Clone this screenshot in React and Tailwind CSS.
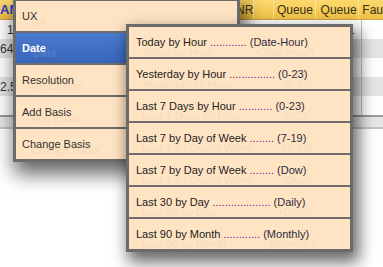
import React from 'react';

const mainItems = ['UX', 'Date', 'Resolution', 'Add Basis', 'Change Basis'];

const subItems = [
  ['Today by Hour', '............', '(Date-Hour)'],
  ['Yesterday by Hour', '...............', '(0-23)'],
  ['Last 7 Days by Hour', '...........', '(0-23)'],
  ['Last 7 by Day of Week', '........', '(7-19)'],
  ['Last 7 by Day of Week', '........', '(Dow)'],
  ['Last 30 by Day', '...................', '(Daily)'],
  ['Last 90 by Month', '............', '(Monthly)'],
];

const rows = [
  { left: '1', pad: 'pl-[7px]', right: '1', bg: 'bg-white' },
  { left: '64', pad: 'pl-0', right: '', bg: 'bg-[#e4e4e4]' },
  { left: '', pad: 'pl-0', right: '', bg: 'bg-white' },
  { left: '2.5', pad: 'pl-0', right: '', bg: 'bg-[#e4e4e4]' },
  { left: '', pad: 'pl-0', right: '', bg: 'bg-white' },
];

const App = () => {
  return (
    <div className="relative w-[383px] h-[267px] overflow-hidden bg-white font-['Liberation_Sans',Arial,sans-serif]">
      {/* table behind the menus */}
      <div className="flex flex-col">
        <div className="flex h-[20px] bg-gradient-to-b from-[#fcd96e] to-[#f1c043] border-b border-[#c8a548] text-[12px] text-[#333318]">
          <div className="w-[236px] flex items-center text-[#1f3fd0] font-bold text-[13px]">AM</div>
          <div className="w-[20px] flex items-center pl-[2px] bg-gradient-to-b from-[#f3cd5e] to-[#e8b63c] border-r border-[#fbe39a]">NR</div>
          <div className="w-[20px] border-r border-[#fbe39a]"></div>
          <div className="w-[42px] flex items-center pl-[3px] border-r border-[#fbe39a]">Queue</div>
          <div className="w-[44px] flex items-center pl-[5px] border-r border-[#fbe39a]">Queue</div>
          <div className="flex-1 flex items-center pl-[3px]">Fau</div>
        </div>
        {rows.map((r, i) => (
          <div key={i} className={`flex h-[19px] text-[12px] text-[#333] ${r.bg}`}>
            <div className={`w-[236px] flex items-center ${r.pad}`}>{r.left}</div>
            <div className="w-[126px] flex items-center justify-end pr-[6px] border-r border-[#c4c4c4] text-[#6a1b9a]">{r.right}</div>
            <div className="flex-1"></div>
          </div>
        ))}
        <div className="h-[14px] bg-[#e6e6e6] border-t-2 border-[#9a9a9a] border-b-2 border-b-[#c4c4c4]"></div>
      </div>

      {/* main menu */}
      <div className="absolute left-[13px] top-[-2px] w-[227px] border-[3px] border-[#6b6b6b] bg-[#ffe4c4] shadow-[3px_10px_18px_2px_rgba(0,0,0,0.6)] text-[11px] text-[#333]">
        {mainItems.map((label, i) => (
          <div
            key={label}
            className={`h-[30px] box-content flex items-center pl-[6px] ${i > 0 ? 'border-t-2 border-[#6e6e6e]' : ''} ${
              label === 'Date'
                ? 'bg-gradient-to-b from-[#4b7bd0] to-[#3765ba] text-white font-bold [text-shadow:11px_5px_1px_rgba(255,255,255,0.12)]'
                : '[text-shadow:9px_6px_1px_rgba(0,0,0,0.06)]'
            }`}
          >
            {label}
          </div>
        ))}
      </div>

      {/* sub menu */}
      <div className="absolute left-[126px] top-[24px] w-[227px] border-[3px] border-[#6b6b6b] bg-[#ffe4c4] shadow-[4px_8px_15px_2px_rgba(0,0,0,0.6)] text-[11px] text-[#222]">
        {subItems.map(([label, dots, range], i) => (
          <div
            key={i}
            className={`h-[30px] box-content flex items-center pl-[7px] whitespace-pre [text-shadow:6px_10px_1px_rgba(0,0,0,0.05)] ${
              i > 0 ? 'border-t-2 border-[#6e6e6e]' : ''
            }`}
          >
            <span>{label} </span>
            <span className="text-[#7a1080]">{dots}</span>
            <span className="text-[#2c2c40]"> {range}</span>
          </div>
        ))}
      </div>
    </div>
  );
};

export default App;
